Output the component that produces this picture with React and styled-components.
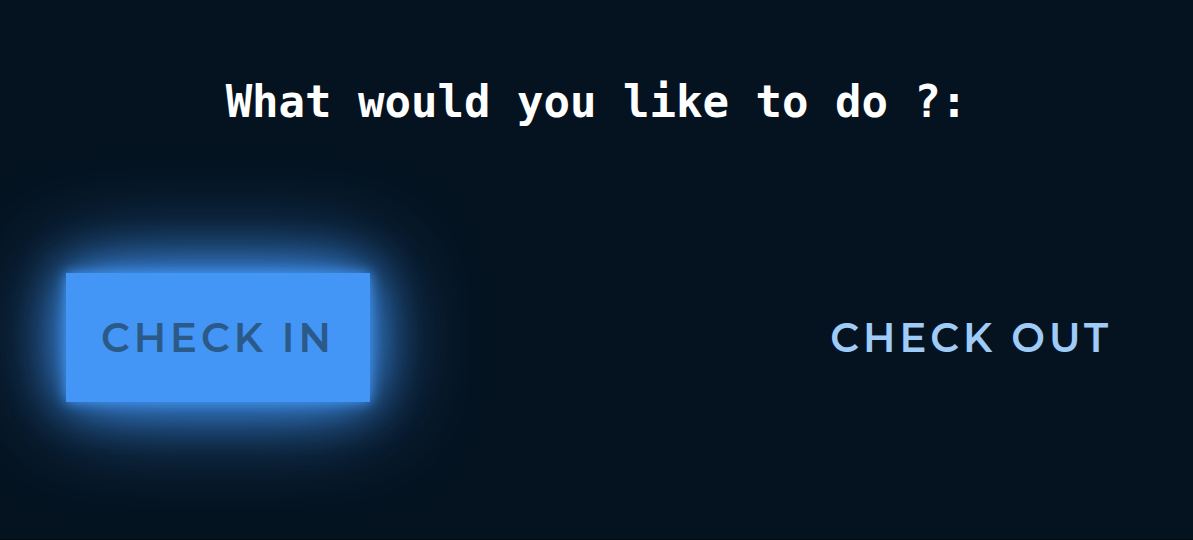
import React from "react";
import styled, { createGlobalStyle } from "styled-components";

const GlobalStyle = createGlobalStyle`
  *, *::before, *::after { box-sizing: border-box; }
  body { margin: 0; background: #051320; }
`;

const Page = styled.main`
  min-height: 100vh;
  display: flex;
  flex-direction: column;
  background: #051320;
  border-bottom: 1px solid #020a12;
  overflow: hidden;
`;

const Title = styled.h1`
  margin: 72px 0 0;
  text-align: center;
  color: #ffffff;
  font: bold 44px/60px Consolas, "DejaVu Sans Mono", monospace;
`;

const Actions = styled.div`
  display: flex;
  justify-content: space-between;
  margin-top: 141px;
  padding: 0 46px 0 66px;
`;

const ActionButton = styled.button`
  height: 129px;
  padding: 0 35px;
  border: 0;
  cursor: pointer;
  font: 600 40px/48px Montserrat, Inter, sans-serif;
  letter-spacing: 4px;
  white-space: nowrap;
  color: ${({ $lit }) => ($lit ? "#2b5a88" : "#9fcbf8")};
  background: ${({ $lit }) => ($lit ? "#4396f5" : "transparent")};
  box-shadow: ${({ $lit }) =>
    $lit ? "0 0 12px #4396f5, 0 0 50px #4396f5, 0 0 100px #4396f5" : "none"};
`;

export default function App() {
  return (
    <>
      <GlobalStyle />
      <Page>
        <Title>What would you like to do ?:</Title>
        <Actions>
          <ActionButton type="button" $lit>CHECK IN</ActionButton>
          <ActionButton type="button">CHECK OUT</ActionButton>
        </Actions>
      </Page>
    </>
  );
}
